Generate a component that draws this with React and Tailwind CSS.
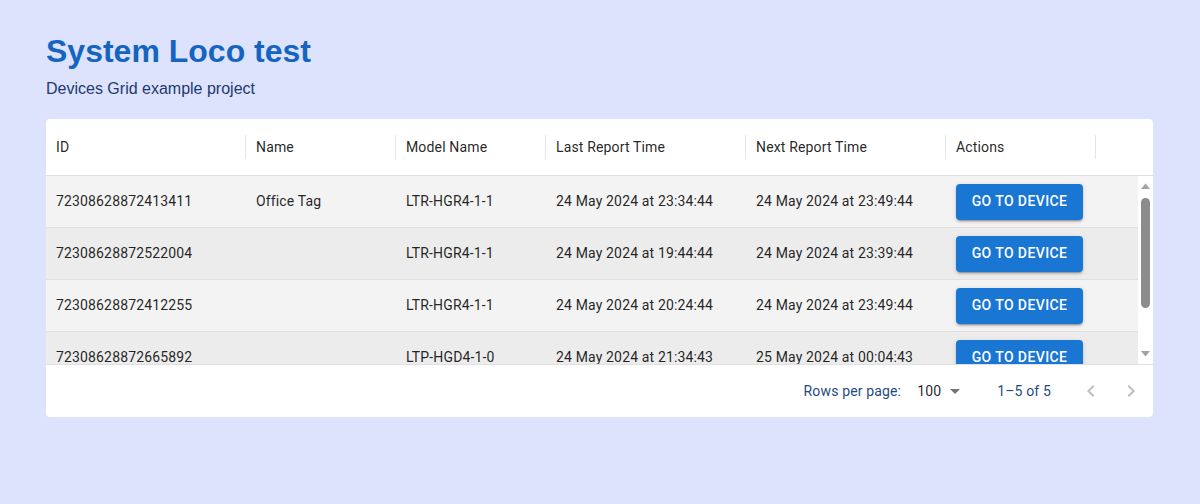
import React from 'react';

const columns = [
    { key: 'id', label: 'ID', w: 'w-[200px]' },
    { key: 'name', label: 'Name', w: 'w-[150px]' },
    { key: 'model', label: 'Model Name', w: 'w-[150px]' },
    { key: 'last', label: 'Last Report Time', w: 'w-[200px]' },
    { key: 'next', label: 'Next Report Time', w: 'w-[200px]' },
    { key: 'actions', label: 'Actions', w: 'w-[150px]' },
];

const rows = [
    { id: '72308628872413411', name: 'Office Tag', model: 'LTR-HGR4-1-1', last: '24 May 2024 at 23:34:44', next: '24 May 2024 at 23:49:44' },
    { id: '72308628872522004', name: '', model: 'LTR-HGR4-1-1', last: '24 May 2024 at 19:44:44', next: '24 May 2024 at 23:39:44' },
    { id: '72308628872412255', name: '', model: 'LTR-HGR4-1-1', last: '24 May 2024 at 20:24:44', next: '24 May 2024 at 23:49:44' },
    { id: '72308628872665892', name: '', model: 'LTP-HGD4-1-0', last: '24 May 2024 at 21:34:43', next: '25 May 2024 at 00:04:43' },
];

const Scrollbar = () => (
    <div className="w-[15px] shrink-0 bg-white flex flex-col items-center">
        <svg width="15" height="17" viewBox="0 0 15 17" className="shrink-0">
            <path d="M3 13 L7.5 7.5 L12 13 Z" fill="#a3a3a3" />
        </svg>
        <div className="flex-1 w-full px-[3px] pt-[5px] flex flex-col">
            <div className="h-[110px] w-full rounded-full bg-[#8c8c8c]" />
        </div>
        <svg width="15" height="17" viewBox="0 0 15 17" className="shrink-0">
            <path d="M3 4 L7.5 9.5 L12 4 Z" fill="#a3a3a3" />
        </svg>
    </div>
);

const App = () => {
    return (
        <div className="min-h-screen bg-[#dde3fd] px-[46px] pt-[33px] font-['Liberation_Sans',Arial,sans-serif]">
            <h1 className="text-[32px] leading-[37px] font-bold text-[#1565c0]">System Loco test</h1>
            <p className="mt-[10px] text-[16px] leading-[18px] text-[#1c3a6e]">Devices Grid example project</p>

            {/* Devices grid */}
            <div className="mt-[21px] w-[1107px] bg-white rounded-[4px] overflow-hidden font-['Roboto',sans-serif] text-[14px] tracking-[0.15px] text-[rgba(0,0,0,0.87)]">
                <div className="flex h-[57px] border-b border-[#e0e0e0]">
                    {columns.map(c => (
                        <div key={c.key} className={`${c.w} shrink-0 flex items-center justify-between pl-[10px]`}>
                            <span>{c.label}</span>
                            <span className="w-px h-[24px] bg-[#e6e6e6]" />
                        </div>
                    ))}
                    <div className="flex-1" />
                </div>

                <div className="flex h-[188px] overflow-hidden">
                    <div className="flex-1 overflow-hidden">
                        {rows.map((r, i) => (
                            <div
                                key={r.id}
                                className={`flex h-[52px] shrink-0 border-b border-[#e0e0e0] ${i % 2 === 0 ? 'bg-[#f3f3f3]' : 'bg-[#ececec]'}`}
                            >
                                <div className="w-[200px] shrink-0 flex items-center px-[10px]">{r.id}</div>
                                <div className="w-[150px] shrink-0 flex items-center px-[10px]">{r.name}</div>
                                <div className="w-[150px] shrink-0 flex items-center px-[10px]">{r.model}</div>
                                <div className="w-[200px] shrink-0 flex items-center px-[10px]">{r.last}</div>
                                <div className="w-[200px] shrink-0 flex items-center px-[10px]">{r.next}</div>
                                <div className="w-[150px] shrink-0 flex items-center px-[10px]">
                                    <button className="h-[36px] w-[127px] rounded-[4px] bg-[#1976d2] text-white text-[14px] font-medium uppercase tracking-[0.4px] shadow-[0_3px_1px_-2px_rgba(0,0,0,0.2),0_2px_2px_0_rgba(0,0,0,0.14),0_1px_5px_0_rgba(0,0,0,0.12)]">
                                        Go to device
                                    </button>
                                </div>
                            </div>
                        ))}
                    </div>
                    <Scrollbar />
                </div>

                <div className="h-[53px] border-t border-[#e0e0e0] flex items-center justify-end pr-[10px]">
                    <span className="text-[#1f4b80]">Rows per page:</span>
                    <div className="ml-[16px] flex items-center">
                        <span>100</span>
                        <svg width="24" height="24" viewBox="0 0 24 24" className="ml-[2px]">
                            <path d="M7 10l5 5 5-5z" fill="rgba(0,0,0,0.54)" />
                        </svg>
                    </div>
                    <span className="ml-[30px] text-[#1f4b80]">1–5 of 5</span>
                    <div className="ml-[28px] flex items-center gap-[16px]">
                        <svg width="24" height="24" viewBox="0 0 24 24">
                            <path d="M15.41 7.41 14 6l-6 6 6 6 1.41-1.41L10.83 12z" fill="rgba(0,0,0,0.26)" />
                        </svg>
                        <svg width="24" height="24" viewBox="0 0 24 24">
                            <path d="M10 6 8.59 7.41 13.17 12l-4.58 4.59L10 18l6-6z" fill="rgba(0,0,0,0.26)" />
                        </svg>
                    </div>
                </div>
            </div>
        </div>
    );
};

export default App;
